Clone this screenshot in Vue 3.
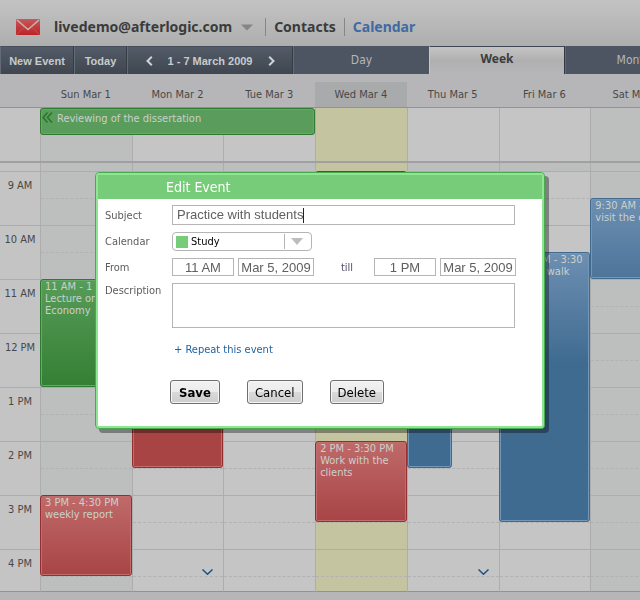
<script setup>
import { ref } from 'vue'

const views = ['Day', 'Week', 'Month']
const activeView = ref('Week')

const hours = ['9 AM', '10 AM', '11 AM', '12 PM', '1 PM', '2 PM', '3 PM', '4 PM']
const slots = Array.from({ length: 16 }, (_, i) => i)

// start and end are hours on a 24-hour clock
const days = [
  {
    name: 'Sun Mar 1', kind: 'weekend', events: [
      { color: 'green', start: 11, end: 13, time: '11 AM - 1 PM', title: 'Lecture on Economy' },
      { color: 'red', start: 15, end: 16.5, time: '3 PM - 4:30 PM', title: 'weekly report' },
    ],
  },
  { name: 'Mon Mar 2', kind: 'work', more: true, events: [{ color: 'red deep', start: 12, end: 14.5 }] },
  { name: 'Tue Mar 3', kind: 'work', events: [] },
  {
    name: 'Wed Mar 4', kind: 'today', events: [
      { color: 'red', start: 9, end: 10 },
      { color: 'red', start: 14, end: 15.5, time: '2 PM - 3:30 PM', title: 'Work with the clients' },
    ],
  },
  { name: 'Thu Mar 5', kind: 'work', more: true, events: [{ color: 'blue deep half', start: 12, end: 14.5 }] },
  {
    name: 'Fri Mar 6', kind: 'work', events: [
      { color: 'blue', start: 10.5, end: 15.5, time: '10:30 AM - 3:30', title: 'Morning walk' },
    ],
  },
  {
    name: 'Sat Mar 7', kind: 'weekend', events: [
      { color: 'blue', start: 9.5, end: 11, time: '9:30 AM - 11 AM', title: 'visit the clinic' },
    ],
  },
]

const rowOf = (hour) => (hour - 9) * 2 + 2
const place = (e) => ({ gridRow: `${rowOf(e.start)} / ${rowOf(e.end)}` })

const form = ref({
  subject: 'Practice with students',
  calendar: 'Study',
  fromTime: '11 AM',
  fromDate: 'Mar 5, 2009',
  tillTime: '1 PM',
  tillDate: 'Mar 5, 2009',
  description: '',
})
</script>

<template>
  <div class="page">
    <header class="top">
      <svg class="logo" width="24" height="17" viewBox="0 0 24 17" aria-hidden="true">
        <defs>
          <linearGradient id="mail" x1="0" y1="0" x2="0" y2="1">
            <stop offset="0" stop-color="#c65a5a" />
            <stop offset="0.5" stop-color="#c43c3e" />
            <stop offset="1" stop-color="#b92427" />
          </linearGradient>
        </defs>
        <rect width="24" height="16" rx="1" fill="url(#mail)" />
        <path d="M1 1 L12 10.500 L23 1" fill="none" stroke="#c9b4b4" stroke-width="1.600" />
        <path d="M1 15 L8.500 8 M23 15 L15.500 8" stroke="#c95a5a" stroke-width="0.700" />
      </svg>
      <a class="account" href="#">livedemo@afterlogic.com</a>
      <svg class="drop" width="12" height="7" viewBox="0 0 12 7" aria-hidden="true">
        <path d="M0 0.500 H12 L6 6.500 Z" fill="#858585" />
      </svg>
      <a class="section" href="#">Contacts</a>
      <a class="section current" href="#">Calendar</a>
    </header>

    <nav class="toolbar">
      <button class="tool new">New Event</button>
      <button class="tool today-btn">Today</button>
      <div class="tool range">
        <button class="step" aria-label="Previous week">
          <svg width="7" height="10" viewBox="0 0 7 10"><path d="M5.800 0.800 L1.500 5 L5.800 9.200" fill="none" stroke="#d0d2d4" stroke-width="2" /></svg>
        </button>
        <span>1 - 7 March 2009</span>
        <button class="step" aria-label="Next week">
          <svg width="7" height="10" viewBox="0 0 7 10"><path d="M1.200 0.800 L5.500 5 L1.200 9.200" fill="none" stroke="#d0d2d4" stroke-width="2" /></svg>
        </button>
      </div>
      <button
        v-for="v in views" :key="v" class="view" :class="{ active: v === activeView }"
        @click="activeView = v"
      >{{ v }}</button>
    </nav>

    <main class="calendar">
      <div class="week heads">
        <span></span>
        <div v-for="d in days" :key="d.name" class="head" :class="d.kind">{{ d.name }}</div>
      </div>

      <div class="allday">
        <div class="week">
          <div class="cell gutter"></div>
          <div v-for="d in days" :key="d.name" class="cell day" :class="d.kind"></div>
        </div>
        <div class="week banners">
          <div class="event green banner">
            <svg width="11" height="11" viewBox="0 0 11 11" aria-hidden="true">
              <path d="M5.500 0.500 L1 5.500 L5.500 10.500 M10 0.500 L5.500 5.500 L10 10.500" fill="none" stroke="#2a742b" stroke-width="1.500" />
            </svg>
            <span>Reviewing of the dissertation</span>
          </div>
        </div>
      </div>

      <div class="week hours">
        <div class="track gutter">
          <div v-for="(h, i) in hours" :key="h" class="hour" :style="{ gridRow: `${i * 2 + 2} / span 2` }">{{ h }}</div>
        </div>
        <div v-for="d in days" :key="d.name" class="track day" :class="d.kind">
          <div class="early"></div>
          <div v-for="s in slots" :key="s" class="slot" :class="{ mid: s % 2 }" :style="{ gridRow: s + 2 }"></div>
          <div v-for="e in d.events" :key="e.start" class="event" :class="e.color" :style="place(e)">
            <div v-if="e.time" class="time">{{ e.time }}</div>
            <div v-if="e.title" class="title">{{ e.title }}</div>
          </div>
          <button v-if="d.more" class="more" aria-label="More events below">
            <svg width="11" height="6" viewBox="0 0 11 6"><path d="M0.500 0.500 L5.500 5.200 L10.500 0.500" fill="none" stroke="#1d4f86" stroke-width="1.500" /></svg>
          </button>
        </div>
      </div>
    </main>

    <div class="overlay">
      <form class="dialog" role="dialog" aria-labelledby="dialog-title" @submit.prevent>
        <h2 id="dialog-title">Edit Event</h2>
        <div class="fields">
          <label for="subject">Subject</label>
          <div class="box subject">
            <input id="subject" v-model="form.subject" type="text">
            <i class="caret"></i>
          </div>

          <label for="calendar">Calendar</label>
          <div class="box picker">
            <i class="swatch"></i>
            <select id="calendar" v-model="form.calendar">
              <option>Study</option>
            </select>
            <span class="arrow">
              <svg width="12" height="7" viewBox="0 0 12 7" aria-hidden="true"><path d="M0 0 H12 L6 7 Z" fill="#bdbdbd" /></svg>
            </span>
          </div>

          <label for="from-time">From</label>
          <div class="period">
            <input id="from-time" v-model="form.fromTime" class="box clock" type="text">
            <input v-model="form.fromDate" class="box date" type="text" aria-label="From date">
            <label class="till" for="till-time">till</label>
            <input id="till-time" v-model="form.tillTime" class="box clock" type="text">
            <input v-model="form.tillDate" class="box date" type="text" aria-label="Till date">
          </div>

          <label class="upper" for="description">Description</label>
          <textarea id="description" v-model="form.description" class="box"></textarea>
        </div>
        <a class="repeat" href="#">+ Repeat this event</a>
        <div class="actions">
          <button class="action save" type="submit">Save</button>
          <button class="action" type="button">Cancel</button>
          <button class="action" type="button">Delete</button>
        </div>
      </form>
    </div>
  </div>
</template>

<style>
body {
  margin: 0;
  background: #b6b6b8;
}
</style>

<style scoped>
* {
  box-sizing: border-box;
}

.page {
  min-height: 100vh;
  overflow: hidden;
  background: #b6b6b8;
  color: #484848;
  font: 11px/13px "DejaVu Sans Condensed", "DejaVu Sans", sans-serif;
}

button,
input,
select,
textarea {
  margin: 0;
  padding: 0;
  border: 0;
  border-radius: 0;
  background: none;
  color: inherit;
  font: inherit;
  outline: 0;
}

svg {
  display: block;
}

a {
  color: inherit;
  text-decoration: none;
}

/* top bar */
.top {
  display: flex;
  align-items: center;
  height: 46px;
  padding: 8px 16px 0;
  background: linear-gradient(#c3c3c3, #aeaeae);
  color: #3b3b3b;
  font: bold 14px/18px "Noto Sans", sans-serif;
}

.account {
  margin-left: 14px;
}

.drop {
  margin: 0 12px 0 9px;
}

.section {
  padding: 0 8px;
  border-left: 1px solid #868686;
}

.section.current {
  color: #3f6aa3;
}

/* toolbar */
.toolbar {
  display: flex;
  height: 28px;
  background: #4c5561;
  color: #c8cacc;
}

.tool {
  flex: none;
  border-top: 1px solid #464e59;
  border-right: 1px solid #353c46;
  border-left: 1px solid #626b76;
  background: linear-gradient(#525b67, #3f4650);
  font: bold 11px/26px "Liberation Sans", sans-serif;
}

.new {
  width: 74px;
}

.today-btn {
  width: 53px;
}

.range {
  display: flex;
  align-items: center;
  justify-content: center;
  gap: 15px;
  width: 166px;
}

.view {
  flex: none;
  width: 136px;
  border-left: 1px solid #5f6b78;
  color: #b4b7ba;
  font-size: 12px;
}

.view.active {
  padding-bottom: 3px;
  border-top: 1px solid #3d4651;
  border-right: 1px solid #303943;
  border-left: 1px solid #c8c8c8;
  background: linear-gradient(#c4c4c5, #b0b0b1 50%, #b6b6b8);
  color: #3c3c3c;
  font: bold 12px/16px "Noto Sans", sans-serif;
}

/* calendar */
.week {
  display: grid;
  grid-template-columns: 40px repeat(7, 1fr);
  width: calc(100% + 42px);
}

.heads {
  padding-top: 8px;
  border-bottom: 1px solid #929294;
}

.head {
  height: 25px;
  line-height: 25px;
  text-align: center;
}

.head.today {
  background: #a8aaab;
}

.allday {
  display: grid;
  border-bottom: 2px solid #a0a0a0;
}

.allday .week {
  grid-row: 1;
  grid-column: 1;
}

.cell {
  height: 53px;
}

.gutter {
  background: #c4c4c4;
}

.day {
  border-left: 1px solid #adadad;
  background: #c5c5c5;
}

.day.weekend {
  background: #bcbfbd;
}

.day.today {
  background: #c5c4a0;
}

.track {
  display: grid;
  grid-template-rows: 8px repeat(15, 27px) 15px;
  grid-template-columns: minmax(0, 1fr);
  border-bottom: 1px solid #929294;
}

.early {
  grid-row: 1;
  grid-column: 1;
  background: #bcbfbd;
}

.today .early {
  background: none;
}

.hour {
  border-top: 1px solid #adadad;
  line-height: 28px;
  text-align: center;
}

.slot {
  grid-column: 1;
  border-top: 1px solid #adadad;
}

.slot.mid {
  border-top: 1px dashed #b2b2b2;
}

.event {
  z-index: 1;
  grid-column: 1;
  overflow: hidden;
  margin-left: -1px;
  padding: 1px 4px;
  border: 1px solid;
  border-radius: 3px;
  color: #cbd0cb;
}

.event.banner {
  display: flex;
  grid-column: 2 / 5;
  gap: 4px;
  height: 27px;
  margin-left: 0;
  padding: 3px 0 0 1px;
}

.time {
  line-height: 12px;
  white-space: nowrap;
}

.title {
  line-height: 12px;
}

.green {
  border-color: #2d7a30;
  background: linear-gradient(#579c58, #357f35);
  box-shadow: inset 0 0 0 1px #66aa67;
}

.green.banner {
  background: #5a9c5b;
}

.red {
  border-color: #942f31;
  background: linear-gradient(#c06a6a, #a84446);
  box-shadow: inset 0 0 0 1px #c26c6c;
}

.blue {
  border-color: #43698c;
  background: linear-gradient(#6d8fb2, #3f6b90 110px);
  box-shadow: inset 0 0 0 1px #7397b9;
}

.red.deep {
  background: #a84444;
}

.blue.deep {
  background: #3f6b90;
}

.half {
  width: 50%;
}

.more {
  z-index: 1;
  grid-row: 16;
  grid-column: 1;
  align-self: end;
  justify-self: end;
  margin: 0 10px 1px 0;
}

/* dialog */
.overlay {
  position: fixed;
  z-index: 5;
  inset: 0;
  display: flex;
  align-items: center;
  justify-content: center;
  padding-top: 1px;
}

.dialog {
  width: 450px;
  padding-bottom: 24px;
  border: 1px solid #4ba850;
  border-radius: 4px;
  background: #fff;
  box-shadow: inset 0 0 0 2px #8ee592, 4px 4px 0 rgba(0, 0, 0, 0.35);
  color: #5c5c5c;
}

h2 {
  margin: 2px 2px 0;
  padding-left: 68px;
  background: #76cc78;
  color: #fff;
  font: 14px/24px "DejaVu Sans Condensed", "DejaVu Sans", sans-serif;
}

.fields {
  display: grid;
  grid-template-columns: 67px 344px;
  row-gap: 7px;
  align-items: center;
  padding: 6px 0 0 9px;
}

.box {
  border: 1px solid #b5b5b5;
  background: #fff;
}

.subject {
  display: flex;
  align-items: center;
  width: 343px;
  height: 20px;
  padding-left: 4px;
}

.subject input,
.period input {
  color: #606060;
  font: 13px/16px "Liberation Sans", sans-serif;
}

.subject input {
  field-sizing: content;
}

.caret {
  width: 1px;
  height: 15px;
  background: #222;
}

.picker {
  display: flex;
  align-items: center;
  width: 140px;
  height: 19px;
  border-radius: 4px;
  padding-left: 3px;
}

.swatch {
  width: 12px;
  height: 12px;
  background: #76cc78;
}

select {
  flex: 1;
  padding-left: 3px;
  appearance: none;
  color: #000;
}

.arrow {
  display: flex;
  align-items: center;
  justify-content: center;
  width: 27px;
  height: 15px;
  padding-right: 3px;
  border-left: 1px solid #b5b5b5;
}

.period {
  display: flex;
  gap: 4px;
}

.period .clock,
.period .date {
  height: 18px;
  text-align: center;
}

.clock {
  width: 62px;
}

.date {
  width: 76px;
}

.till {
  flex: 1;
  padding-left: 6px;
  color: #50506a;
  line-height: 20px;
  text-align: center;
}

.period {
  height: 18px;
}

.upper {
  align-self: start;
  line-height: 16px;
}

textarea {
  width: 343px;
  height: 45px;
  resize: none;
}

.repeat {
  display: block;
  margin: 15px 0 0 78px;
  color: #1f62a0;
}

.actions {
  display: flex;
  gap: 27px;
  margin: 24px 0 0 74px;
}

.action {
  height: 24px;
  padding: 0 7px;
  border: 1px solid #6f6f6f;
  border-radius: 3px;
  background: linear-gradient(#f2f2f2, #ebebeb 50%, #dadada 50%, #cdcdcd);
  box-shadow: inset 0 0 0 1px #f6f6f6;
  color: #000;
  font-size: 13px;
}

.action.save {
  padding: 0 8px;
  font-weight: bold;
}
</style>
